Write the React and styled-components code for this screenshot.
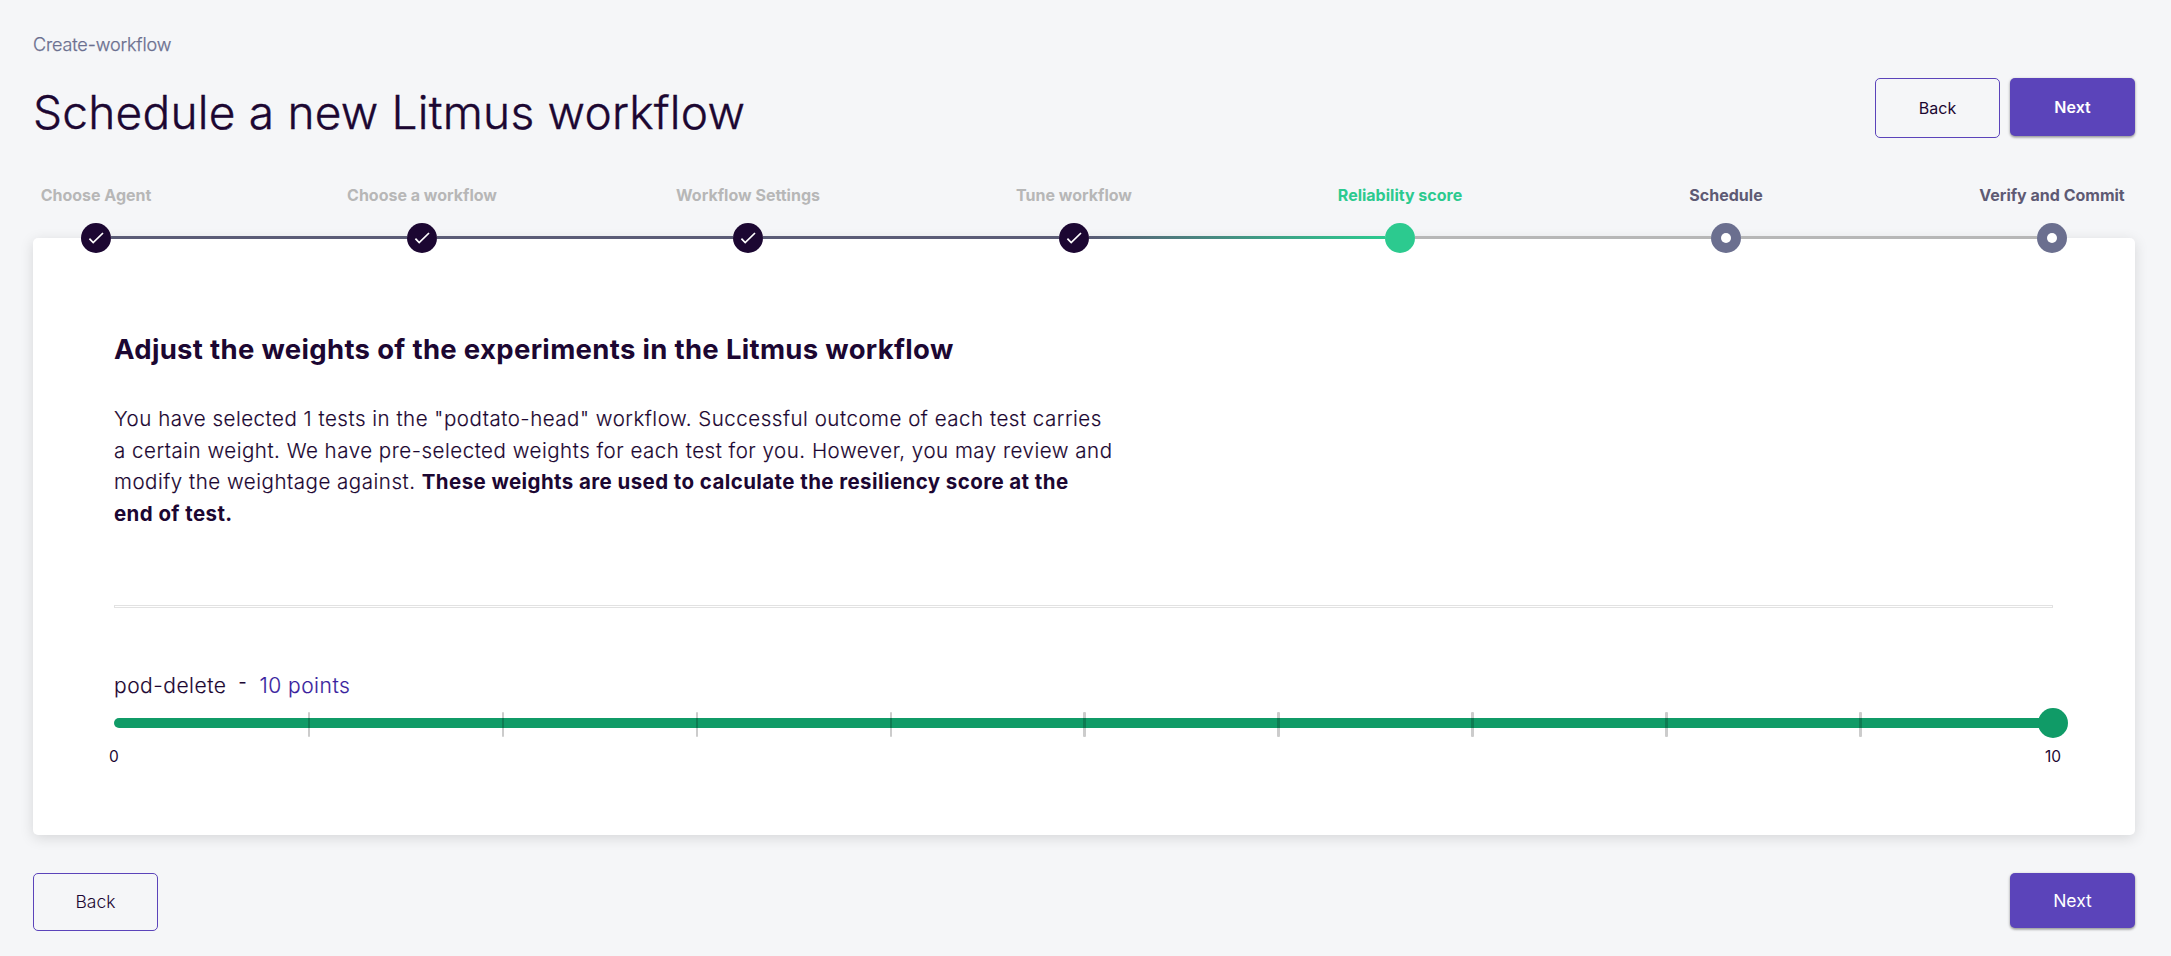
import React from 'react';
import styled, { createGlobalStyle, css } from 'styled-components';

const colors = {
  page: '#f5f6f8',
  ink: '#1c0732',
  muted: '#6b6f8f',
  primary: '#5b44ba',
  points: '#3a1f9e',
  active: '#2cca8f',
  slider: '#109b67',
  line: '#5b5c76',
  disabled: '#b7b7b7',
};

const GlobalStyle = createGlobalStyle`
  *, *::before, *::after { box-sizing: border-box; }
  body {
    margin: 0;
    background: ${colors.page};
    color: ${colors.ink};
    font-family: Inter, "Liberation Sans", sans-serif;
  }
  button { font-family: inherit; }
`;

const Page = styled.main`
  min-height: 956px;
  padding: 34px 36px 0 33px;
  background: ${colors.page};
`;

const Header = styled.header`
  display: flex;
  justify-content: space-between;
  height: 151px;
`;

const Breadcrumb = styled.div`
  font-size: 18px;
  font-weight: 300;
  line-height: 21px;
  letter-spacing: -0.13px;
  -webkit-text-stroke: 0.25px currentColor;
  color: ${colors.muted};
`;

const Title = styled.h1`
  margin: 29px 0 0;
  font-size: 46px;
  font-weight: 300;
  line-height: 56px;
  letter-spacing: 0.23px;
  -webkit-text-stroke: 0.4px currentColor;
  white-space: nowrap;
`;

const HeaderActions = styled.div`
  display: flex;
  align-items: flex-start;
  gap: 10px;
  padding-top: 44px;
`;

const Button = styled.button`
  display: flex;
  align-items: center;
  justify-content: center;
  width: 125px;
  padding: 0;
  border-radius: 5px;
  ${({ $large }) =>
    $large
      ? css`font-size: 17.5px; line-height: 21px;`
      : css`font-size: 16px; line-height: 20px;`}
`;

const BackButton = styled(Button)`
  height: ${({ $large }) => ($large ? 58 : 60)}px;
  padding-bottom: ${({ $large }) => ($large ? 1 : 0)}px;
  border: 1px solid ${colors.primary};
  background: transparent;
  color: ${colors.ink};
  font-weight: ${({ $large }) => ($large ? 300 : 400)};
`;

const NextButton = styled(Button)`
  height: ${({ $large }) => ($large ? 55 : 58)}px;
  border: 0;
  background: ${colors.primary};
  color: #fff;
  font-weight: ${({ $large }) => ($large ? 400 : 600)};
  box-shadow: 0 1px 3px rgba(0, 0, 0, 0.35), 0 2px 2px rgba(0, 0, 0, 0.12);
`;

const Stepper = styled.div`
  position: relative;
  z-index: 1;
  display: flex;
  align-items: flex-end;
  height: 68px;
  padding: 0 68px 0 48px;
`;

const Step = styled.div`
  display: flex;
  flex: none;
  flex-direction: column;
  align-items: center;
  justify-content: space-between;
  width: 30px;
  height: 68px;
`;

const labelColor = { done: colors.disabled, active: colors.active, pending: '#5e5a74' };
const nodeColor = { done: colors.ink, active: colors.active, pending: colors.muted };

const StepLabel = styled.span`
  font-size: 16px;
  font-weight: 700;
  line-height: 20px;
  white-space: nowrap;
  color: ${({ $state }) => labelColor[$state]};
`;

const StepNode = styled.div`
  display: flex;
  align-items: center;
  justify-content: center;
  width: 30px;
  height: 30px;
  border-radius: 50%;
  background: ${({ $state }) => nodeColor[$state]};
`;

const PendingDot = styled.span`
  width: 10px;
  height: 10px;
  border-radius: 50%;
  background: #fff;
`;

const lineFill = {
  done: colors.line,
  active: `linear-gradient(90deg, ${colors.line} 0%, ${colors.active} 100%)`,
  pending: colors.disabled,
};

const Connector = styled.div`
  flex: 1;
  height: 3px;
  margin-bottom: 14px;
  background: ${({ $state }) => lineFill[$state]};
`;

const Card = styled.section`
  height: 597px;
  margin-top: -15px;
  padding: 94px 82px 0 81px;
  border-radius: 5px;
  background: #fff;
  box-shadow: 0 3px 14px rgba(0, 0, 0, 0.13);
`;

const Heading = styled.h2`
  margin: 0;
  font-size: 27.5px;
  font-weight: 700;
  line-height: 34px;
  letter-spacing: 0.32px;
`;

const Description = styled.p`
  width: 1010px;
  margin: 37px 0 0;
  font-size: 20.5px;
  font-weight: 300;
  line-height: 31.5px;
  letter-spacing: 0.52px;
  -webkit-text-stroke: 0.15px currentColor;
  white-space: nowrap;

  strong {
    font-weight: 700;
    letter-spacing: 0.41px;
    -webkit-text-stroke: 0;
  }
`;

const Divider = styled.hr`
  height: 3px;
  margin: 76px 0 65px;
  border: 1px solid #e2e2e2;
  background: #fff;
`;

const WeightRow = styled.div`
  display: flex;
  font-size: 21px;
  font-weight: 300;
  line-height: 25px;
  letter-spacing: 0.5px;
  -webkit-text-stroke: 0.15px currentColor;
`;

const Dash = styled.span`
  width: 8px;
  margin: -4px 13px 0 12px;
  font-size: 17.5px;
  font-weight: 400;
`;

const Points = styled.span`
  color: ${colors.points};
`;

const Slider = styled.div`
  display: grid;
  align-items: center;
  height: 30px;
  margin-top: 10px;

  > * { grid-area: 1 / 1; }
`;

const Rail = styled.div`
  height: 10px;
  border-radius: 5px;
  background: ${colors.slider};
`;

const Marks = styled.div`
  display: grid;
  grid-template-columns: repeat(10, 1fr);
  height: 25px;
  margin-top: 3px;
`;

const Mark = styled.span`
  width: 2.5px;
  border-radius: 1px;
  background: ${({ $hidden }) => ($hidden ? 'transparent' : 'rgba(0, 0, 0, 0.2)')};
`;

const Thumb = styled.div`
  justify-self: end;
  width: 30px;
  height: 30px;
  margin-right: -15px;
  border-radius: 50%;
  background: ${colors.slider};
`;

const Scale = styled.div`
  display: flex;
  justify-content: space-between;
  margin: 9px -15px 0;
  font-size: 15.5px;
  font-weight: 400;
  line-height: 20px;

  span {
    width: 30px;
    text-align: center;
  }
`;

const Footer = styled.footer`
  display: flex;
  align-items: flex-start;
  justify-content: space-between;
  padding-top: 38px;
`;

const steps = [
  ['Choose Agent', 'done'],
  ['Choose a workflow', 'done'],
  ['Workflow Settings', 'done'],
  ['Tune workflow', 'done'],
  ['Reliability score', 'active'],
  ['Schedule', 'pending'],
  ['Verify and Commit', 'pending'],
];

const CheckIcon = () => (
  <svg width="30" height="30" viewBox="0 0 30 30" fill="none">
    <path d="M8.4 15.7L12.2 19.6L22 10" stroke="#fff" strokeWidth="1.7" />
  </svg>
);

export default function App() {
  return (
    <>
      <GlobalStyle />
      <Page>
        <Header>
          <div>
            <Breadcrumb>Create-workflow</Breadcrumb>
            <Title>Schedule a new Litmus workflow</Title>
          </div>
          <HeaderActions>
            <BackButton>Back</BackButton>
            <NextButton>Next</NextButton>
          </HeaderActions>
        </Header>

        <Stepper>
          {steps.map(([label, state], i) => (
            <React.Fragment key={label}>
              {i > 0 && <Connector $state={state} />}
              <Step>
                <StepLabel $state={state}>{label}</StepLabel>
                <StepNode $state={state}>
                  {state === 'done' && <CheckIcon />}
                  {state === 'pending' && <PendingDot />}
                </StepNode>
              </Step>
            </React.Fragment>
          ))}
        </Stepper>

        <Card>
          <Heading>Adjust the weights of the experiments in the Litmus workflow</Heading>
          <Description>
            You have selected 1 tests in the "podtato-head" workflow. Successful outcome of each test carries
            <br />
            a certain weight. We have pre-selected weights for each test for you. However, you may review and
            <br />
            modify the weightage against. <strong>These weights are used to calculate the resiliency score at the
            <br />
            end of test.</strong>
          </Description>
          <Divider />
          <WeightRow>
            <span>pod-delete</span>
            <Dash>-</Dash>
            <Points>10 points</Points>
          </WeightRow>
          <Slider>
            <Rail />
            <Marks>
              {Array.from({ length: 10 }, (_, i) => (
                <Mark key={i} $hidden={i === 0} />
              ))}
            </Marks>
            <Thumb />
          </Slider>
          <Scale>
            <span>0</span>
            <span>10</span>
          </Scale>
        </Card>

        <Footer>
          <BackButton $large>Back</BackButton>
          <NextButton $large>Next</NextButton>
        </Footer>
      </Page>
    </>
  );
}
